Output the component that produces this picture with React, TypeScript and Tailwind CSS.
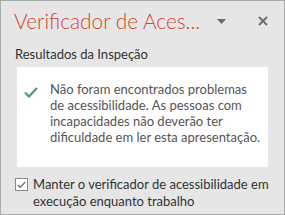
import { useState } from "react";

export default function App() {
  const [keepRunning, setKeepRunning] = useState(true);

  return (
    <div
      className="w-[285px] h-[215px] bg-[#e6e6e6] border border-[#ababab] flex flex-col text-[#444444]"
      style={{ fontFamily: 'Lato, "Noto Sans", sans-serif' }}
    >
      {/* Header */}
      <div className="flex items-center h-[38px] pl-[13px] pt-[2px]">
        <h1 className="w-[203px] text-[20.8px] font-light leading-none text-[#d24726] whitespace-nowrap">
          Verificador de Aces...
        </h1>
        <button type="button" className="w-[9px] h-[10px] flex items-center justify-center">
          <svg width="9" height="5" viewBox="0 0 9 5">
            <path d="M0 0 H9 L4.5 5 Z" fill="#6b6b6b" />
          </svg>
        </button>
        <button type="button" className="ml-[32px] w-[10px] h-[10px] flex items-center justify-center">
          <svg width="10" height="10" viewBox="0 0 10 10">
            <path d="M1 1 L9 9 M9 1 L1 9" stroke="#6b6b6b" strokeWidth="1.8" />
          </svg>
        </button>
      </div>

      <p className="pl-[14px] mt-[7px] text-[13px] leading-[16px] text-[#333333]">Resultados da Inspeção</p>

      {/* Results card */}
      <div className="mx-[16px] mt-[5px] h-[100px] bg-white flex pt-[14px]">
        <svg className="ml-[7px] mt-[6px] shrink-0" width="14" height="11" viewBox="0 0 14 11">
          <path d="M1 5.5 L5 9.5 L13 1" fill="none" stroke="#4a9a7f" strokeWidth="2.2" />
        </svg>
        <p className="ml-[12px] pr-[6px] text-[13px] leading-[16px] text-[#555555]">
          Não foram encontrados problemas de acessibilidade. As pessoas com incapacidades não deverão ter
          dificuldade em ler esta apresentação.
        </p>
      </div>

      {/* Option */}
      <label className="flex mt-[9px] pl-[14px] pr-[10px] cursor-pointer">
        <input
          type="checkbox"
          checked={keepRunning}
          onChange={(e) => setKeepRunning(e.target.checked)}
          className="hidden"
        />
        <span className="mt-[2px] w-[13px] h-[13px] shrink-0 border border-[#8a8a8a] bg-white flex items-center justify-center">
          {keepRunning && (
            <svg width="9" height="8" viewBox="0 0 9 8">
              <path d="M0.8 4 L3.3 6.5 L8.2 1" fill="none" stroke="#666666" strokeWidth="1.2" />
            </svg>
          )}
        </span>
        <span className="ml-[5px] text-[13px] leading-[17px] text-[#333333]">
          Manter o verificador de acessibilidade em execução enquanto trabalho
        </span>
      </label>
    </div>
  );
}
